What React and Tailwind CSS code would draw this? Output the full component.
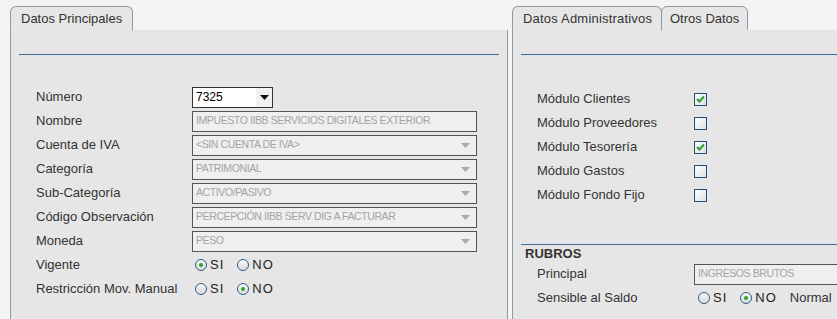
import React from 'react';

const FONT = { fontFamily: '"Liberation Sans", Arial, sans-serif' };

const Arrow = ({ dark }) => (
    <svg width="9" height="5" viewBox="0 0 9 5" className="shrink-0">
        <path d="M0 0 H9 L4.5 5 Z" fill={dark ? '#111' : '#a9a9a9'} />
    </svg>
);

const Radio = ({ checked, label }) => (
    <span className="flex items-center gap-[3px] mr-[13px]">
        <span className="w-[12px] h-[12px] rounded-full border border-[#2c5d8c] bg-gradient-to-b from-[#f6f6f6] to-[#dcdcdc] flex items-center justify-center">
            {checked && <span className="w-[4px] h-[4px] rounded-full bg-[#29a329]" />}
        </span>
        <span className="text-[13px] text-[#222] tracking-[1px]">{label}</span>
    </span>
);

const Check = ({ checked }) => (
    <span className="w-[13px] h-[13px] border border-[#1f4f7e] bg-gradient-to-br from-[#ffffff] to-[#dedede] flex items-center justify-center">
        {checked && (
            <svg width="9" height="8" viewBox="0 0 9 8">
                <path d="M1 4 L3.5 6.5 L8 1.5" stroke="#2f9e2f" strokeWidth="2" fill="none" />
            </svg>
        )}
    </span>
);

const Field = ({ value, select }) => (
    <div className="w-[285px] h-[21px] border border-[#555] bg-[#efefef] flex items-center justify-between pl-[3px] pr-[6px]">
        <span className="text-[10.5px] text-[#a4a4a4] tracking-[-0.4px] whitespace-nowrap">{value}</span>
        {select && <Arrow />}
    </div>
);

const Row = ({ label, children, labelW = 'w-[156px]' }) => (
    <div className="h-[24px] flex items-center">
        <span className={`${labelW} text-[13px] text-[#333] whitespace-nowrap`}>{label}</span>
        {children}
    </div>
);

const Tab = ({ label, active, className = '' }) => (
    <div
        className={`h-[25px] flex items-center rounded-t-[6px] border border-[#8d9aa4] bg-[#e6e6e6] text-[13px] text-[#333] whitespace-nowrap ${className} ${
            active ? 'border-b-[#e6e6e6] relative z-10' : ''
        }`}
    >
        {label}
    </div>
);

export default function App() {
    return (
        <div style={FONT} className="w-[837px] h-[319px] overflow-hidden bg-[#f4f4f4] flex gap-[4px] pl-[10px] pt-[6px]">
            {/* Datos Principales */}
            <div className="w-[498px] flex flex-col shrink-0">
                <div className="flex items-end">
                    <Tab label="Datos Principales" active className="px-[10px]" />
                    <div className="flex-1 border-b border-[#8d9aa4]" />
                </div>
                <div className="flex-1 -mt-[1px] border-x border-[#8d9aa4] bg-[#e6e6e6] pt-[24px] px-[8px]">
                    <div className="h-px bg-[#3b6e9a]" />
                    <div className="pt-[30px] pl-[17px]">
                        <Row label="Número">
                            <div className="w-[81px] h-[21px] border border-[#333] bg-white flex items-center justify-between pl-[3px]">
                                <span className="text-[12px] text-black">7325</span>
                                <span className="h-full w-[16px] bg-[#f1f1f1] flex items-center justify-center">
                                    <Arrow dark />
                                </span>
                            </div>
                        </Row>
                        <Row label="Nombre"><Field value="IMPUESTO IIBB SERVICIOS DIGITALES EXTERIOR" /></Row>
                        <Row label="Cuenta de IVA"><Field value="<SIN CUENTA DE IVA>" select /></Row>
                        <Row label="Categoría"><Field value="PATRIMONIAL" select /></Row>
                        <Row label="Sub-Categoría"><Field value="ACTIVO/PASIVO" select /></Row>
                        <Row label="Código Observación"><Field value="PERCEPCIÓN IIBB SERV DIG A FACTURAR" select /></Row>
                        <Row label="Moneda"><Field value="PESO" select /></Row>
                        <Row label="Vigente">
                            <span className="flex pl-[3px]">
                                <Radio checked label="SI" />
                                <Radio label="NO" />
                            </span>
                        </Row>
                        <Row label="Restricción Mov. Manual">
                            <span className="flex pl-[3px]">
                                <Radio label="SI" />
                                <Radio checked label="NO" />
                            </span>
                        </Row>
                    </div>
                </div>
            </div>

            {/* Datos Administrativos */}
            <div className="flex-1 flex flex-col">
                <div className="flex items-end">
                    <Tab label="Datos Administrativos" active className="w-[150px] pl-[10px] tracking-[0.2px]" />
                    <div className="-ml-[1px]">
                        <Tab label="Otros Datos" className="w-[87px] pl-[8px]" />
                    </div>
                    <div className="flex-1 border-b border-[#8d9aa4]" />
                </div>
                <div className="flex-1 -mt-[1px] border-l border-[#8d9aa4] bg-[#e6e6e6] pt-[24px] pl-[8px]">
                    <div className="h-px bg-[#3b6e9a]" />
                    <div className="pt-[32px] pl-[16px]">
                        {[
                            ['Módulo Clientes', true],
                            ['Módulo Proveedores', false],
                            ['Módulo Tesorería', true],
                            ['Módulo Gastos', false],
                            ['Módulo Fondo Fijo', false],
                        ].map(([label, checked]) => (
                            <Row key={label} label={label} labelW="w-[157px]">
                                <Check checked={checked} />
                            </Row>
                        ))}
                    </div>
                    <div className="mt-[37px] h-px bg-[#3b6e9a]" />
                    <div className="pl-[4px] h-[17px] flex items-center text-[13px] font-bold text-[#333]">RUBROS</div>
                    <div className="pl-[16px]">
                        <Row label="Principal" labelW="w-[157px]">
                            <div className="flex-1 h-[21px] border border-r-0 border-[#555] bg-[#efefef] flex items-center pl-[3px]">
                                <span className="text-[10.5px] text-[#a4a4a4] tracking-[-0.4px]">INGRESOS BRUTOS</span>
                            </div>
                        </Row>
                        <Row label="Sensible al Saldo" labelW="w-[161px]">
                            <span className="flex items-center">
                                <Radio label="SI" />
                                <Radio checked label="NO" />
                                <span className="text-[13px] text-[#333]">Normal</span>
                            </span>
                        </Row>
                    </div>
                </div>
            </div>
        </div>
    );
}
